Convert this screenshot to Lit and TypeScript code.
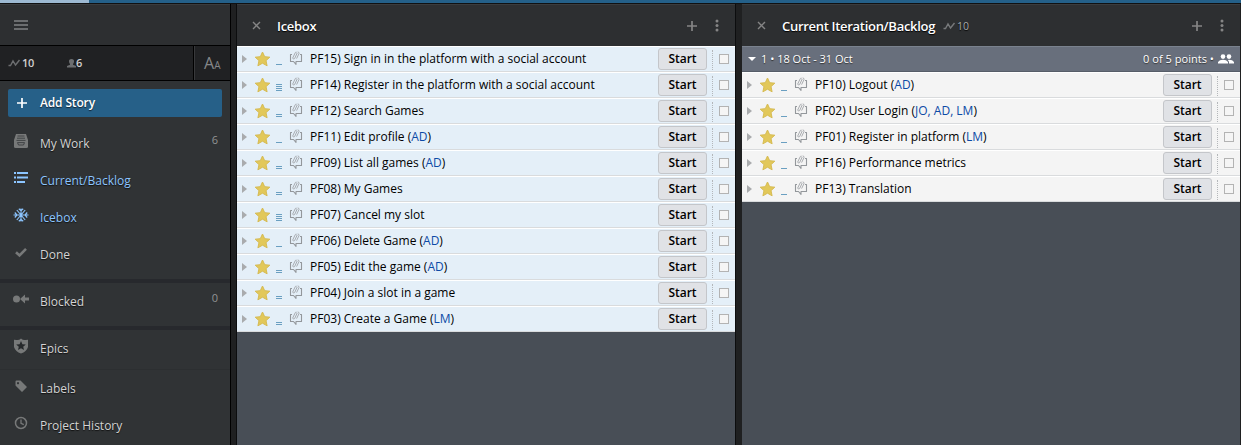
import { LitElement, html, css, svg, nothing, TemplateResult } from "lit";
import { customElement, property } from "lit/decorators.js";

const velocity = html`<svg class="velocity" width="13" height="8" viewBox="0 0 13 8"><path d="M0.5 6.5L2.5 6.5L5 2L7.5 6L11.5 1" fill="none" stroke="currentColor" stroke-width="1.4"/></svg>`;
const close = html`<svg width="9" height="9" viewBox="0 0 9 9"><path d="M1 1L8 8M8 1L1 8" stroke="#858585" stroke-width="1.4"/></svg>`;
const plus = html`<svg width="10" height="10" viewBox="0 0 10 10"><path d="M5 0V10M0 5H10" stroke="#858585" stroke-width="1.7"/></svg>`;
const dots = html`<svg width="4" height="13" viewBox="0 0 4 13" fill="#858585"><circle cx="2" cy="2" r="1.5"/><circle cx="2" cy="6.5" r="1.5"/><circle cx="2" cy="11" r="1.5"/></svg>`;

const icons: Record<string, TemplateResult> = {
  work: svg`<path d="M3 1H13L15 7V13.5Q15 15 13.5 15H2.5Q1 15 1 13.5V7Z" fill="currentColor"/><path d="M4.500 3H11.500M4 5.200H12M3.500 7.400H12.500M4.500 9.600L5.500 12H10.500L11.500 9.600Z" fill="none" stroke="#3a3d3f" stroke-width="0.900"/>`,
  list: svg`<path d="M1 3H3M1 7.500H3M1 12H3M4 3H15M4 7.500H15M4 12H12" stroke="currentColor" stroke-width="2"/>`,
  snow: svg`<path d="M8 1.500V14.500M0.500 8H15.500M3.800 3L12.200 13M12.200 3L3.800 13M5.800 1.800L8 3.800L10.200 1.800M5.800 14.200L8 12.200L10.200 14.200M1.800 5.500L4 8L1.800 10.500M14.200 5.500L12 8L14.200 10.500" fill="none" stroke="currentColor" stroke-width="1.150"/>`,
  check: svg`<path d="M3 8.200L6.500 11.500L13 4.800" fill="none" stroke="currentColor" stroke-width="2.600"/>`,
  blocked: svg`<circle cx="3.500" cy="8" r="3.500" fill="currentColor"/><path d="M7 8L12 3.500V6.500H16V9.500H12V12.500Z" fill="currentColor"/>`,
  epics: svg`<path d="M8 0.500Q10 2.500 12.500 2L15 1.800V9Q13.500 13.800 8 15.500Q2.500 13.800 1 9V1.800L3.500 2Q6 2.500 8 0.500Z" fill="currentColor"/><path d="M8 3L9.400 6.200L12.800 6.500L10.200 8.700L11 12L8 10.200L5 12L5.800 8.700L3.200 6.500L6.600 6.200Z" fill="#26292b"/>`,
  tag: svg`<path fill-rule="evenodd" d="M2.500 3.500Q2.500 2.500 3.500 2.500H7.500L14 9L9 14L2.500 7.500ZM5 4A1.100 1.100 0 1 0 5.010 4Z" fill="currentColor"/>`,
  clock: svg`<circle cx="8" cy="8" r="5.500" fill="none" stroke="currentColor" stroke-width="1.500"/><path d="M8 4.500V8.300L10.800 9.700" fill="none" stroke="currentColor" stroke-width="1.300"/>`,
};

@customElement("nav-item")
class NavItem extends LitElement {
  @property() icon = "";
  @property() label = "";
  @property() count = "";
  @property({ type: Boolean, reflect: true }) active = false;
  static styles = css`
    :host { display: flex; height: 37px; padding: 0 12px 0 13px; color: #d4d4d4; align-items: center; }
    :host([active]) { color: #8cc5ff; }
    .icon { width: 16px; height: 16px; color: #777979; margin: 0 11px 5px 0; flex: none; }
    :host([active]) .icon { color: #8cc5ff; }
    .label { flex: 1; text-shadow: 0 1px 1px #111; }
    .count { font-size: 11px; color: #929494; margin-bottom: 7px; }
  `;
  render() {
    return html`<svg class="icon" viewBox="0 0 16 16">${icons[this.icon]}</svg>
      <span class="label">${this.label}</span><span class="count">${this.count}</span>`;
  }
}

@customElement("story-row")
class StoryRow extends LitElement {
  @property() name = "";
  @property() owners = "";
  @property({ type: Number }) points = 1;
  static styles = css`
    :host { display: flex; align-items: center; height: 26px; box-sizing: border-box; border-top: 1px solid #fff; border-bottom: 1px solid #d9dbdd; color: #000; }
    .arrow { width: 5px; height: 8px; margin: 0 7px 0 5px; }
    .star { width: 17px; height: 16px; margin: 0 5px 0 0; }
    .points { width: 6px; height: 7px; display: flex; flex-direction: column; justify-content: flex-end; gap: 1px; margin: 5px 7px 0 0; }
    .points i { height: 1px; background: #6a9fc1; }
    .bubble { width: 14px; height: 14px; margin: 0 7px 2px 0; }
    .title { flex: 1; white-space: nowrap; }
    .owners { color: #0c4aa6; }
    .start { box-sizing: border-box; width: 49px; height: 22px; border: 1px solid #c4c6ca; border-radius: 3px; background: #e0e2e6; font: 600 12px/19px "Open Sans", sans-serif; text-align: center; color: #000; margin-bottom: 1px; }
    .dots { height: 20px; border-left: 1px dotted #b4b7ba; margin: 2px 6px 0 5px; }
    .box { box-sizing: border-box; width: 10px; height: 10px; border: 1px solid #b3b3b3; background: #f5f5f5; margin: 0 6px 0 0; }
  `;
  render() {
    return html`<svg class="arrow" viewBox="0 0 5 8"><path d="M0 0L5 4L0 8Z" fill="#a9abad"/></svg>
      <svg class="star" viewBox="0 0 17 16"><path d="M8.500 1L10.700 5.700L15.800 6.200L12 9.600L13.100 14.800L8.500 12.200L3.900 14.800L5 9.600L1.200 6.200L6.300 5.700Z" fill="#e2c85a" stroke="#d6bb52" stroke-width="1" stroke-linejoin="round"/></svg>
      <span class="points">${Array.from({ length: this.points }, () => html`<i></i>`)}</span>
      <svg class="bubble" viewBox="0 0 14 14" fill="none" stroke="#93979b"><path d="M3 3.500H1.500V10.500H4.500L7 13.300V10.500H12.500V3.500H11" stroke-width="1.100" stroke-linejoin="round"/><path d="M3.700 7L6.300 1.600Q6.900 0.600 7.700 1.300M5.600 7.600L8.200 2M7.600 7.600L10 2.600Q10.200 0.900 8.700 0.900M3.700 7Q4.200 8.800 5.600 7.600" stroke="#a0a4a8" stroke-width="0.900"/></svg>
      <span class="title">${this.name}${this.owners ? html` (<span class="owners">${this.owners}</span>)` : nothing}</span>
      <span class="start">Start</span><span class="dots"></span><span class="box"></span>`;
  }
}

type Story = [string, number, string?];
const icebox: Story[] = [
  ["PF15) Sign in in the platform with a social account", 1],
  ["PF14) Register in the platform with a social account", 4],
  ["PF12) Search Games", 2],
  ["PF11) Edit profile", 1, "AD"],
  ["PF09) List all games", 2, "AD"],
  ["PF08) My Games", 2],
  ["PF07) Cancel my slot", 4],
  ["PF06) Delete Game", 1, "AD"],
  ["PF05) Edit the game", 2, "AD"],
  ["PF04) Join a slot in a game", 2],
  ["PF03) Create a Game", 2, "LM"],
];
const backlog: Story[] = [
  ["PF10) Logout", 1, "AD"],
  ["PF02) User Login", 1, "JO, AD, LM"],
  ["PF01) Register in platform", 1, "LM"],
  ["PF16) Performance metrics", 1],
  ["PF13) Translation", 1],
];

@customElement("app-root")
class AppRoot extends LitElement {
  static styles = css`
    :host { display: flex; flex-direction: column; width: 1241px; height: 445px; overflow: hidden; background: #1f2021; font: 12px/18px "Open Sans", sans-serif; }
    .progress { height: 3px; flex: none; background: #246089; border-bottom: 1px solid #101112; }
    .loaded { width: 89px; height: 3px; background: #9db9d2; }
    .main { display: flex; flex: 1; min-height: 0; }
    .side { width: 230px; flex: none; background: #303335; border-right: 1px solid #000; }
    .menu { height: 40px; border-top: 1px solid #3a3c3e; background: #2d2f31; display: flex; align-items: center; padding-left: 14px; }
    .stats { height: 34px; border: solid #000; border-width: 1px 0; background: #202123; display: flex; align-items: center; color: #d0d0d0; font-size: 11px; font-weight: 600; letter-spacing: -0.4px; }
    .stat { display: flex; align-items: center; gap: 1px; }
    .stat svg { color: #6c6e70; }
    .vel { width: 50px; padding-left: 8px; }
    .members { flex: 1; gap: 0; padding-left: 1px; }
    .fonts { box-sizing: border-box; width: 37px; height: 34px; border-left: 1px solid #000; box-shadow: inset 1px 0 #38393b; color: #858789; font-weight: 400; line-height: 34px; padding-left: 10px; white-space: nowrap; letter-spacing: 0; }
    .big { font-size: 16px; }
    .small { font-size: 10px; }
    .add { height: 28px; margin: 8px 8px 8px; border-radius: 2px; background: #266088; color: #fff; font-weight: 600; display: flex; align-items: center; padding-left: 9px; gap: 13px; text-shadow: 0 1px 1px #123; letter-spacing: -0.15px; }
    .group { padding-bottom: 6px; }
    .group + .group { border-top: 4px solid #27292d; }
    .last { padding: 0; }
    .epics { border-bottom: 1px solid #2c2f31; padding-bottom: 2px; }
    .panel { width: 498px; flex: none; background: #484e56; }
    .ice { margin: 0 5px; border: solid #0c0d0e; border-width: 0 1px; }
    .current { margin-left: 1px; }
    .head { box-sizing: border-box; height: 42px; background: #2d2f31; border-top: 1px solid #3a3c3e; display: flex; align-items: center; color: #fff; padding: 0 16px 0 15px; font-weight: 600; font-size: 13px; text-shadow: 0 1px 1px #000; }
    .name { margin: 1px 0 0 16px; white-space: nowrap; letter-spacing: -0.3px; }
    .pv { margin: 1px 0 0 8px; color: #a9abad; font-size: 10.500px; font-weight: 400; display: flex; align-items: center; gap: 1px; }
    .pv svg { color: #77797b; }
    .actions { margin-left: auto; display: flex; align-items: center; gap: 18px; }
    .blue { background: #e4eff8; }
    .white { background: #f4f4f4; }
    .iter { box-sizing: border-box; height: 26px; background: #686f7c; border-top: 1px solid #7a828e; border-bottom: 1px solid #565d68; color: #fff; display: flex; align-items: center; padding: 0 6px; text-shadow: 0 1px 1px #333; font-size: 11px; }
    .range { flex: 1; margin-left: 5px; }
    .done { letter-spacing: 0.03px; }
    .people { margin-left: 4px; }
  `;
  private story([name, points, owners]: Story, tint: string) {
    return html`<story-row class=${tint} .name=${name} .points=${points} .owners=${owners ?? ""}></story-row>`;
  }
  render() {
    return html`
      <div class="progress"><div class="loaded"></div></div>
      <div class="main">
        <div class="side">
          <div class="menu"><svg width="14" height="10" viewBox="0 0 14 10"><path d="M0 1H14M0 5H14M0 9H14" stroke="#6b6d6f" stroke-width="2"/></svg></div>
          <div class="stats">
            <span class="stat vel">${velocity}10</span>
            <span class="stat members"><svg width="17" height="9" viewBox="0 0 17 9"><path d="M12.500 0Q15.300 0 15 2.800Q14.800 4.300 14 5V5.800L17 7V8.500H8V7L11 5.800V5Q10.200 4.300 10 2.800Q9.700 0 12.500 0Z" fill="currentColor"/></svg>6</span>
            <span class="fonts"><span class="big">A</span><span class="small">A</span></span>
          </div>
          <div class="add"><svg width="10" height="10" viewBox="0 0 10 10"><path d="M5 0V10M0 5H10" stroke="#fff" stroke-width="1.700"/></svg>Add Story</div>
          <div class="group">
            <nav-item icon="work" label="My Work" count="6"></nav-item>
            <nav-item icon="list" label="Current/Backlog" active></nav-item>
            <nav-item icon="snow" label="Icebox" active></nav-item>
            <nav-item icon="check" label="Done"></nav-item>
          </div>
          <div class="group"><nav-item icon="blocked" label="Blocked" count="0"></nav-item></div>
          <div class="group last">
            <div class="epics"><nav-item icon="epics" label="Epics"></nav-item></div>
            <nav-item icon="tag" label="Labels"></nav-item>
            <nav-item icon="clock" label="Project History"></nav-item>
          </div>
        </div>
        <div class="panel ice">
          <div class="head">${close}<span class="name">Icebox</span><span class="actions">${plus}${dots}</span></div>
          ${icebox.map((s) => this.story(s, "blue"))}
        </div>
        <div class="panel current">
          <div class="head">${close}<span class="name">Current Iteration/Backlog</span><span class="pv">${velocity}10</span><span class="actions">${plus}${dots}</span></div>
          <div class="iter"><svg width="8" height="4" viewBox="0 0 8 4"><path d="M0 0H8L4 4Z" fill="#fff"/></svg>
            <span class="range">1 • 18 Oct - 31 Oct</span><span class="done">0 of 5 points •</span>
            <svg class="people" width="16" height="10" viewBox="0 0 16 10" fill="#fff"><circle cx="5" cy="2.600" r="2.300"/><circle cx="11" cy="2.600" r="2.300"/><path d="M0 9.500V8Q1.500 5.800 5 5.800Q8.500 5.800 10 8V9.500ZM11 9.500V7.800L9.800 5.900Q14.500 5.500 16 8V9.500Z"/></svg></div>
          ${backlog.map((s) => this.story(s, "white"))}
        </div>
      </div>`;
  }
}
